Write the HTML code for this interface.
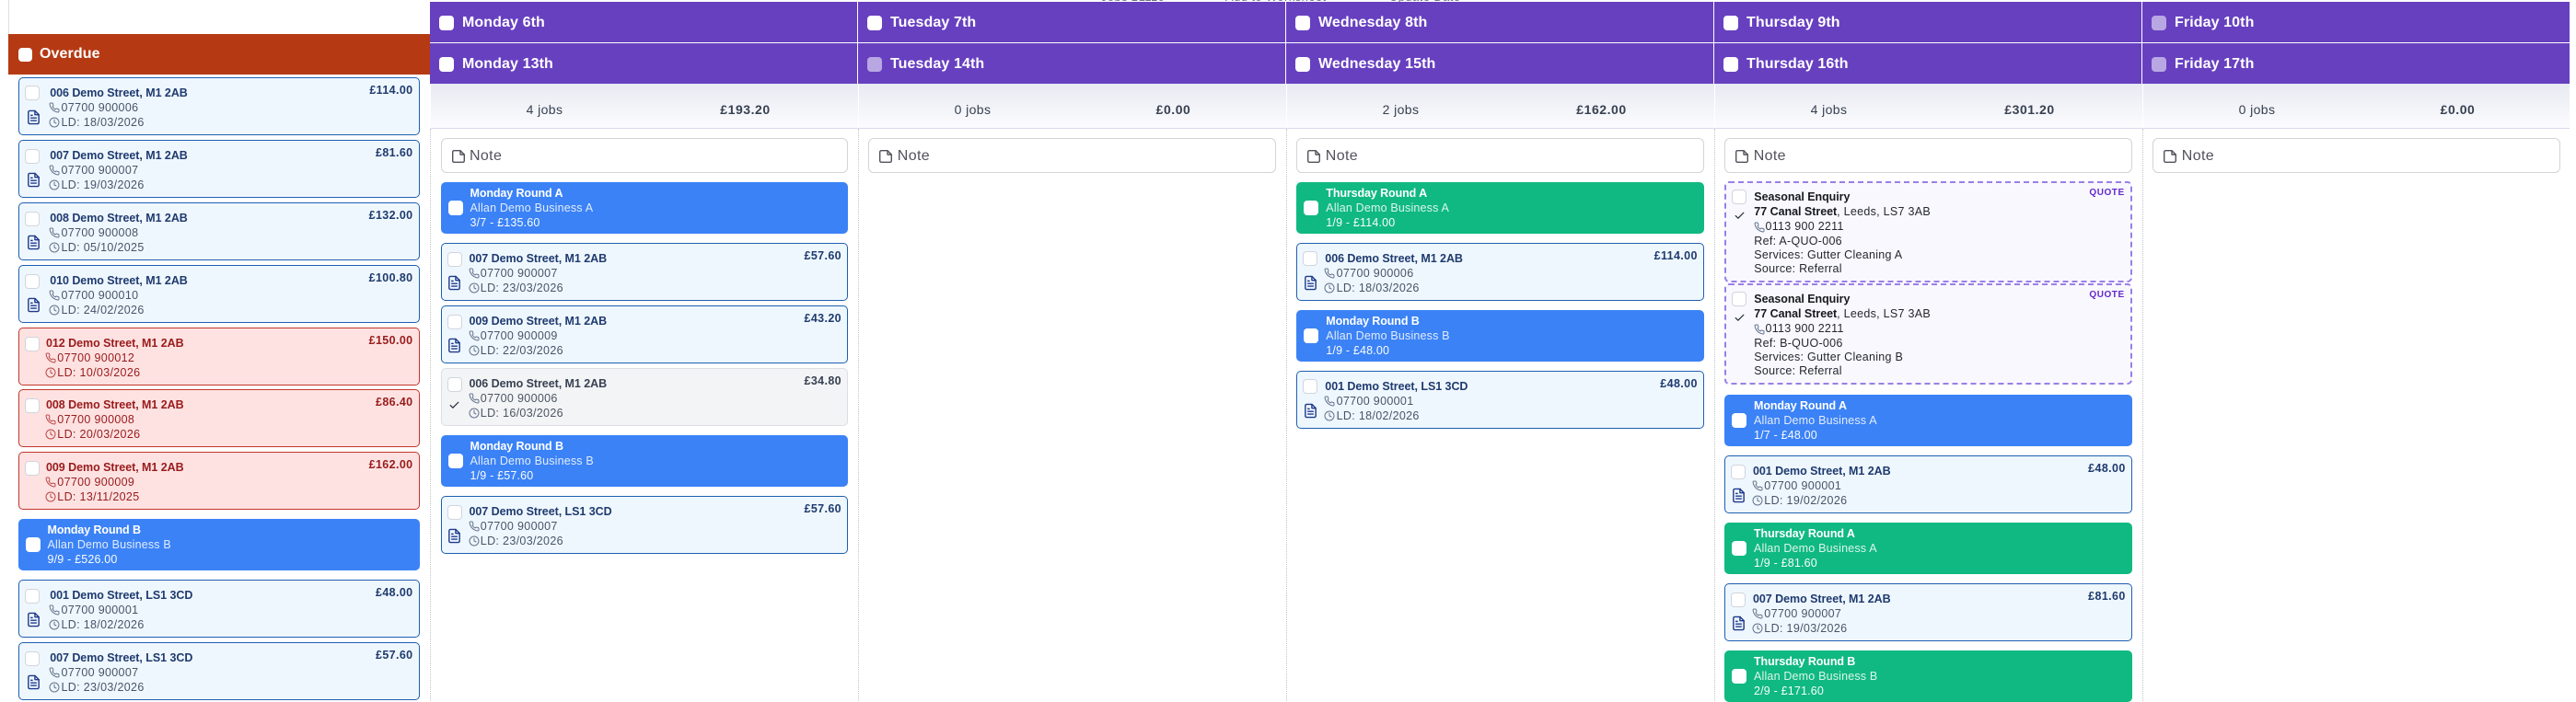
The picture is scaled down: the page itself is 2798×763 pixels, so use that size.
<!DOCTYPE html>
<html lang="en"><head><meta charset="utf-8"><title>Schedule</title>
<style>
*{box-sizing:border-box}
html,body{margin:0;padding:0;width:2798px;height:762px;overflow:hidden;background:#fff;font-family:"Liberation Sans",sans-serif}
.a{position:absolute;white-space:nowrap}
svg{position:absolute;fill:none;stroke-linecap:round;stroke-linejoin:round;overflow:visible}
.hd{position:absolute;height:44px;background:#6740c0}
.hd i{position:absolute;left:10.3px;top:14.7px;width:16px;height:16px;border-radius:4px;background:#fff}
.hd.o i{background:#b9a7e3}
.hd b{position:absolute;left:35px;top:13px;font-size:16px;line-height:20px;color:#fff;white-space:nowrap;letter-spacing:.1px}
.st{position:absolute;top:91px;height:49px;background:linear-gradient(#e8eaf2,#fcfcfe);border-bottom:1px solid #dcd8ec;border-left:1px solid #fff;font-size:14px;color:#374151;width:465px}
.st span{position:absolute;top:19px;line-height:18px;transform:translateX(-50%);white-space:nowrap;letter-spacing:.4px}
.st span+span{font-weight:bold;letter-spacing:.55px}
.dot{position:absolute;top:140px;height:622px;width:0;border-left:1px dotted #c4c4c8}
.n{position:absolute;top:150px;height:38px;width:442.5px;border:1px solid #d4d4d8;border-radius:6px;background:#fff;color:#52525b;font-size:16px}
.n svg{left:11px;top:12px;stroke:#52525b;stroke-width:1.4}
.n span{position:absolute;left:30.5px;top:9px;line-height:20px;letter-spacing:.35px}
.c{position:absolute;height:62.67px;border:1px solid #1d5fb0;border-radius:5px;background:#eff7fe;font-size:12.5px;color:#475569;--x:30px;--k:#1e3a6e}
.c.w{--x:33.7px}
.c.r{background:#fee2e2;border-color:#c2362b;color:#991b1b;--k:#991b1b;--x:29.5px}
.c.g{background:#f3f4f6;border-color:#dcdee2;color:#4b5563;--k:#374151}
.cb{position:absolute;left:6px;top:8.3px;width:16px;height:16px;border-radius:4px;background:#fff;border:1px solid #d1d5db}
.c .t,.c .p,.c .l{position:absolute;left:var(--x);line-height:16px;white-space:nowrap}
.c .t{top:8px;font-weight:bold;color:var(--k);letter-spacing:-.05px}
.c .p,.c .l{left:calc(var(--x) + 12.3px);letter-spacing:.33px}
.c .p{top:24px}.c .l{top:39.7px}
.c .f{left:5.5px;top:33.6px;stroke:#1e3a8a;stroke-width:2}
.c.w .f{left:7.4px}
.c .ip,.c .ic{left:calc(var(--x) - 1px);stroke:#64748b;stroke-width:2}
.c.r .ip,.c.r .ic{stroke:#b94a48}
.c .ip{top:26px}.c .ic{top:42px}
.c .pr{position:absolute;right:6px;top:5px;line-height:16px;font-weight:bold;color:var(--k);letter-spacing:.38px}
.c .ck,.q .ck{stroke:#1f2937;stroke-width:2.2}
.c .ck{left:7.3px;top:33.2px}
.rd{position:absolute;height:56px;border-radius:5px;font-size:12.5px;color:#fff}
.rd.bl{background:#3b82f6}.rd.gr{background:#10b981}
.rd i{position:absolute;left:8px;top:20px;width:16px;height:16px;border-radius:4px;background:#fff}
.rd span{position:absolute;left:32px;line-height:16px;white-space:nowrap;letter-spacing:.18px}
.rd .a1{top:4px;font-weight:bold;letter-spacing:-.1px}
.rd .a2{top:20px;opacity:.85}
.rd .a3{top:36px;opacity:.97}
.q{position:absolute;left:1873px;width:442.7px;height:110px;border:2px dashed #9a7fe6;border-radius:5px;background:#f8f8fe;font-size:12.5px;color:#27272f}
.q span{position:absolute;left:30.3px;line-height:16px;white-space:nowrap;letter-spacing:.28px}
.q .tt{font-weight:bold;letter-spacing:-.05px;color:#18181f}
.q b{letter-spacing:-.03px;color:#18181f}
.q .qt{left:auto;right:6px;top:3px;font-size:10px;font-weight:bold;color:#6428cc;letter-spacing:.55px}
.q .cb{top:7px;left:6px}
.q .ck{left:7.8px;top:28.5px}
.q .ip{left:29.5px;top:42px;stroke:#64748b;stroke-width:2}
</style></head><body>
<svg width="0" height="0" style="position:absolute"><defs>
<symbol id="ph" viewBox="0 0 24 24"><path d="M22 16.92v3a2 2 0 0 1-2.18 2 19.79 19.79 0 0 1-8.63-3.07 19.5 19.5 0 0 1-6-6 19.79 19.79 0 0 1-3.07-8.67A2 2 0 0 1 4.11 2h3a2 2 0 0 1 2 1.72 12.84 12.84 0 0 0 .7 2.81 2 2 0 0 1-.45 2.11L8.09 9.91a16 16 0 0 0 6 6l1.27-1.27a2 2 0 0 1 2.11-.45 12.84 12.84 0 0 0 2.81.7A2 2 0 0 1 22 16.92z"/></symbol>
<symbol id="cl" viewBox="0 0 24 24"><circle cx="12" cy="12" r="10"/><path d="M12 6v6l4 2"/></symbol>
<symbol id="fl" viewBox="0 0 24 24"><path d="M14 2H6a2 2 0 0 0-2 2v16a2 2 0 0 0 2 2h12a2 2 0 0 0 2-2V8z"/><path d="M14 2v6h6M16 13H8M16 17H8M10 9H8"/></symbol>
<symbol id="ck" viewBox="0 0 24 24"><path d="M20 6 9 17l-5-5"/></symbol>
<symbol id="nt" viewBox="0 0 14 14"><path d="M2.2.7H9L13.3 5v6.8a1.5 1.5 0 0 1-1.5 1.5H2.2A1.5 1.5 0 0 1 .7 11.800V2.200A1.500 1.500 0 0 1 2.200.7z"/><path d="M9 .7V5h4.300"/></symbol>
</defs></svg>

<div class="a" style="left:0;top:0;width:2798px;height:2px;overflow:hidden;background:#fff">
<span class="a" style="left:1196px;top:-11px;font-size:13px;color:#6b7280;letter-spacing:.4px">Jobs £1110</span>
<span class="a" style="left:1331px;top:-11px;font-size:13px;color:#6b7280;letter-spacing:.4px">Add to Worksheet</span>
<span class="a" style="left:1509px;top:-11px;font-size:13px;color:#6b7280;letter-spacing:.4px">Update Date</span>
</div>
<div class="a" style="left:9px;top:0;width:1px;height:37px;background:#e0e0e0"></div>
<div class="a" style="left:9px;top:37px;width:457.5px;height:44px;background:#b53a14"></div>
<div class="a" style="left:19.6px;top:51.7px;width:15.5px;height:15.500px;border-radius:4px;background:#fff"></div>
<div class="a" style="left:43px;top:49px;font-size:16px;line-height:20px;font-weight:bold;color:#fff;letter-spacing:.1px">Overdue</div>

<div class="hd" style="left:467px;top:2px;width:464px"><i></i><b>Monday 6th</b></div>
<div class="hd" style="left:467px;top:47px;width:464px"><i></i><b>Monday 13th</b></div>
<div class="hd" style="left:932px;top:2px;width:464px"><i></i><b>Tuesday 7th</b></div>
<div class="hd o" style="left:932px;top:47px;width:464px"><i></i><b>Tuesday 14th</b></div>
<div class="hd" style="left:1397px;top:2px;width:464px"><i></i><b>Wednesday 8th</b></div>
<div class="hd" style="left:1397px;top:47px;width:464px"><i></i><b>Wednesday 15th</b></div>
<div class="hd" style="left:1862px;top:2px;width:464px"><i></i><b>Thursday 9th</b></div>
<div class="hd" style="left:1862px;top:47px;width:464px"><i></i><b>Thursday 16th</b></div>
<div class="hd o" style="left:2327px;top:2px;width:464px"><i></i><b>Friday 10th</b></div>
<div class="hd o" style="left:2327px;top:47px;width:464px"><i></i><b>Friday 17th</b></div>

<div class="st" style="left:466.5px"><span style="left:124px">4 jobs</span><span style="left:342px">£193.20</span></div>
<div class="st" style="left:931.5px"><span style="left:124px">0 jobs</span><span style="left:342px">£0.00</span></div>
<div class="st" style="left:1396.5px"><span style="left:124px">2 jobs</span><span style="left:342px">£162.00</span></div>
<div class="st" style="left:1861.5px"><span style="left:124px">4 jobs</span><span style="left:342px">£301.20</span></div>
<div class="st" style="left:2326.5px;width:464.5px"><span style="left:124px">0 jobs</span><span style="left:342px">£0.00</span></div>

<div class="dot" style="left:467px"></div><div class="dot" style="left:932px"></div><div class="dot" style="left:1397px"></div><div class="dot" style="left:1862px"></div><div class="dot" style="left:2327px"></div>

<div class="n" style="left:478.5px"><svg width="14" height="14"><use href="#nt"/></svg><span>Note</span></div>
<div class="n" style="left:943.3px"><svg width="14" height="14"><use href="#nt"/></svg><span>Note</span></div>
<div class="n" style="left:1408.300px"><svg width="14" height="14"><use href="#nt"/></svg><span>Note</span></div>
<div class="n" style="left:1873.200px"><svg width="14" height="14"><use href="#nt"/></svg><span>Note</span></div>
<div class="n" style="left:2338.300px"><svg width="14" height="14"><use href="#nt"/></svg><span>Note</span></div>

<!-- Overdue column -->
<div class="c w" style="left:19.5px;top:84px;width:436px"><i class="cb"></i><svg class="f" width="17" height="17"><use href="#fl"/></svg><span class="t">006 Demo Street, M1 2AB</span><svg class="ip" width="12" height="12"><use href="#ph"/></svg><span class="p">07700 900006</span><svg class="ic" width="12" height="12"><use href="#cl"/></svg><span class="l">LD: 18/03/2026</span><span class="pr">£114.00</span></div>
<div class="c w" style="left:19.5px;top:152.3px;width:436px"><i class="cb"></i><svg class="f" width="17" height="17"><use href="#fl"/></svg><span class="t">007 Demo Street, M1 2AB</span><svg class="ip" width="12" height="12"><use href="#ph"/></svg><span class="p">07700 900007</span><svg class="ic" width="12" height="12"><use href="#cl"/></svg><span class="l">LD: 19/03/2026</span><span class="pr">£81.60</span></div>
<div class="c w" style="left:19.5px;top:220.3px;width:436px"><i class="cb"></i><svg class="f" width="17" height="17"><use href="#fl"/></svg><span class="t">008 Demo Street, M1 2AB</span><svg class="ip" width="12" height="12"><use href="#ph"/></svg><span class="p">07700 900008</span><svg class="ic" width="12" height="12"><use href="#cl"/></svg><span class="l">LD: 05/10/2025</span><span class="pr">£132.00</span></div>
<div class="c w" style="left:19.5px;top:288.3px;width:436px"><i class="cb"></i><svg class="f" width="17" height="17"><use href="#fl"/></svg><span class="t">010 Demo Street, M1 2AB</span><svg class="ip" width="12" height="12"><use href="#ph"/></svg><span class="p">07700 900010</span><svg class="ic" width="12" height="12"><use href="#cl"/></svg><span class="l">LD: 24/02/2026</span><span class="pr">£100.80</span></div>
<div class="c r" style="left:19.5px;top:356.3px;width:436px"><i class="cb"></i><span class="t">012 Demo Street, M1 2AB</span><svg class="ip" width="12" height="12"><use href="#ph"/></svg><span class="p">07700 900012</span><svg class="ic" width="12" height="12"><use href="#cl"/></svg><span class="l">LD: 10/03/2026</span><span class="pr">£150.00</span></div>
<div class="c r" style="left:19.5px;top:423.3px;width:436px"><i class="cb"></i><span class="t">008 Demo Street, M1 2AB</span><svg class="ip" width="12" height="12"><use href="#ph"/></svg><span class="p">07700 900008</span><svg class="ic" width="12" height="12"><use href="#cl"/></svg><span class="l">LD: 20/03/2026</span><span class="pr">£86.40</span></div>
<div class="c r" style="left:19.5px;top:491.3px;width:436px"><i class="cb"></i><span class="t">009 Demo Street, M1 2AB</span><svg class="ip" width="12" height="12"><use href="#ph"/></svg><span class="p">07700 900009</span><svg class="ic" width="12" height="12"><use href="#cl"/></svg><span class="l">LD: 13/11/2025</span><span class="pr">£162.00</span></div>
<div class="rd bl" style="left:19.5px;top:564px;width:436px"><i></i><span class="a1">Monday Round B</span><span class="a2">Allan Demo Business B</span><span class="a3">9/9 - £526.00</span></div>
<div class="c w" style="left:19.5px;top:630.3px;width:436px"><i class="cb"></i><svg class="f" width="17" height="17"><use href="#fl"/></svg><span class="t">001 Demo Street, LS1 3CD</span><svg class="ip" width="12" height="12"><use href="#ph"/></svg><span class="p">07700 900001</span><svg class="ic" width="12" height="12"><use href="#cl"/></svg><span class="l">LD: 18/02/2026</span><span class="pr">£48.00</span></div>
<div class="c w" style="left:19.5px;top:698.3px;width:436px"><i class="cb"></i><svg class="f" width="17" height="17"><use href="#fl"/></svg><span class="t">007 Demo Street, LS1 3CD</span><svg class="ip" width="12" height="12"><use href="#ph"/></svg><span class="p">07700 900007</span><svg class="ic" width="12" height="12"><use href="#cl"/></svg><span class="l">LD: 23/03/2026</span><span class="pr">£57.60</span></div>

<!-- Monday -->
<div class="rd bl" style="left:478.5px;top:198px;width:442.5px"><i></i><span class="a1">Monday Round A</span><span class="a2">Allan Demo Business A</span><span class="a3">3/7 - £135.60</span></div>
<div class="c" style="left:478.5px;top:264.3px;width:442.5px"><i class="cb"></i><svg class="f" width="17" height="17"><use href="#fl"/></svg><span class="t">007 Demo Street, M1 2AB</span><svg class="ip" width="12" height="12"><use href="#ph"/></svg><span class="p">07700 900007</span><svg class="ic" width="12" height="12"><use href="#cl"/></svg><span class="l">LD: 23/03/2026</span><span class="pr">£57.60</span></div>
<div class="c" style="left:478.5px;top:332.3px;width:442.5px"><i class="cb"></i><svg class="f" width="17" height="17"><use href="#fl"/></svg><span class="t">009 Demo Street, M1 2AB</span><svg class="ip" width="12" height="12"><use href="#ph"/></svg><span class="p">07700 900009</span><svg class="ic" width="12" height="12"><use href="#cl"/></svg><span class="l">LD: 22/03/2026</span><span class="pr">£43.20</span></div>
<div class="c g" style="left:478.5px;top:400.3px;width:442.5px"><i class="cb"></i><svg class="ck" width="13" height="13"><use href="#ck"/></svg><span class="t">006 Demo Street, M1 2AB</span><svg class="ip" width="12" height="12"><use href="#ph"/></svg><span class="p">07700 900006</span><svg class="ic" width="12" height="12"><use href="#cl"/></svg><span class="l">LD: 16/03/2026</span><span class="pr">£34.80</span></div>
<div class="rd bl" style="left:478.5px;top:473px;width:442.5px"><i></i><span class="a1">Monday Round B</span><span class="a2">Allan Demo Business B</span><span class="a3">1/9 - £57.60</span></div>
<div class="c" style="left:478.5px;top:539.3px;width:442.5px"><i class="cb"></i><svg class="f" width="17" height="17"><use href="#fl"/></svg><span class="t">007 Demo Street, LS1 3CD</span><svg class="ip" width="12" height="12"><use href="#ph"/></svg><span class="p">07700 900007</span><svg class="ic" width="12" height="12"><use href="#cl"/></svg><span class="l">LD: 23/03/2026</span><span class="pr">£57.60</span></div>

<!-- Wednesday -->
<div class="rd gr" style="left:1408.3px;top:198px;width:442.5px"><i></i><span class="a1">Thursday Round A</span><span class="a2">Allan Demo Business A</span><span class="a3">1/9 - £114.00</span></div>
<div class="c" style="left:1408.3px;top:264px;width:442.5px"><i class="cb"></i><svg class="f" width="17" height="17"><use href="#fl"/></svg><span class="t">006 Demo Street, M1 2AB</span><svg class="ip" width="12" height="12"><use href="#ph"/></svg><span class="p">07700 900006</span><svg class="ic" width="12" height="12"><use href="#cl"/></svg><span class="l">LD: 18/03/2026</span><span class="pr">£114.00</span></div>
<div class="rd bl" style="left:1408.3px;top:337px;width:442.5px"><i></i><span class="a1">Monday Round B</span><span class="a2">Allan Demo Business B</span><span class="a3">1/9 - £48.00</span></div>
<div class="c" style="left:1408.3px;top:403px;width:442.5px"><i class="cb"></i><svg class="f" width="17" height="17"><use href="#fl"/></svg><span class="t">001 Demo Street, LS1 3CD</span><svg class="ip" width="12" height="12"><use href="#ph"/></svg><span class="p">07700 900001</span><svg class="ic" width="12" height="12"><use href="#cl"/></svg><span class="l">LD: 18/02/2026</span><span class="pr">£48.00</span></div>

<!-- Thursday -->
<div class="q" style="top:197px"><i class="cb"></i><svg class="ck" width="13" height="13"><use href="#ck"/></svg><span class="tt" style="top:7px">Seasonal Enquiry</span><span style="top:23px"><b>77 Canal Street</b>, Leeds, LS7 3AB</span><svg class="ip" width="12" height="12"><use href="#ph"/></svg><span style="top:39px;left:42.500px">0113 900 2211</span><span style="top:55px">Ref: A-QUO-006</span><span style="top:70px">Services: Gutter Cleaning A</span><span style="top:85px">Source: Referral</span><span class="qt">QUOTE</span></div>
<div class="q" style="top:308.3px"><i class="cb"></i><svg class="ck" width="13" height="13"><use href="#ck"/></svg><span class="tt" style="top:7px">Seasonal Enquiry</span><span style="top:23px"><b>77 Canal Street</b>, Leeds, LS7 3AB</span><svg class="ip" width="12" height="12"><use href="#ph"/></svg><span style="top:39px;left:42.500px">0113 900 2211</span><span style="top:55px">Ref: B-QUO-006</span><span style="top:70px">Services: Gutter Cleaning B</span><span style="top:85px">Source: Referral</span><span class="qt">QUOTE</span></div>
<div class="rd bl" style="left:1873px;top:429px;width:442.7px"><i></i><span class="a1">Monday Round A</span><span class="a2">Allan Demo Business A</span><span class="a3">1/7 - £48.00</span></div>
<div class="c" style="left:1873px;top:495.3px;width:442.7px"><i class="cb"></i><svg class="f" width="17" height="17"><use href="#fl"/></svg><span class="t">001 Demo Street, M1 2AB</span><svg class="ip" width="12" height="12"><use href="#ph"/></svg><span class="p">07700 900001</span><svg class="ic" width="12" height="12"><use href="#cl"/></svg><span class="l">LD: 19/02/2026</span><span class="pr">£48.00</span></div>
<div class="rd gr" style="left:1873px;top:568px;width:442.7px"><i></i><span class="a1">Thursday Round A</span><span class="a2">Allan Demo Business A</span><span class="a3">1/9 - £81.60</span></div>
<div class="c" style="left:1873px;top:634.3px;width:442.7px"><i class="cb"></i><svg class="f" width="17" height="17"><use href="#fl"/></svg><span class="t">007 Demo Street, M1 2AB</span><svg class="ip" width="12" height="12"><use href="#ph"/></svg><span class="p">07700 900007</span><svg class="ic" width="12" height="12"><use href="#cl"/></svg><span class="l">LD: 19/03/2026</span><span class="pr">£81.60</span></div>
<div class="rd gr" style="left:1873px;top:707px;width:442.7px"><i></i><span class="a1">Thursday Round B</span><span class="a2">Allan Demo Business B</span><span class="a3">2/9 - £171.60</span></div>
</body></html>
